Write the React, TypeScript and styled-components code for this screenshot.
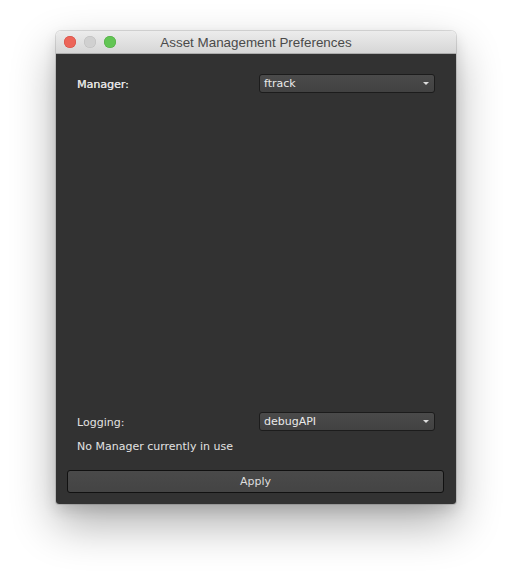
import styled, { createGlobalStyle } from 'styled-components';

const GlobalStyle = createGlobalStyle`
  html, body {
    margin: 0;
    padding: 0;
    background: #ffffff;
  }
`;

const Page = styled.div`
  width: 512px;
  height: 584px;
  padding: 31px 0 0 56px;
  box-sizing: border-box;
`;

const Window = styled.div`
  width: 400px;
  height: 473px;
  display: flex;
  flex-direction: column;
  border-radius: 5px 5px 3px 3px;
  overflow: hidden;
  box-shadow: 0 0 0 1px rgba(0, 0, 0, 0.12), 0 20px 45px rgba(0, 0, 0, 0.32), 0 6px 14px rgba(0, 0, 0, 0.12);
`;

const TitleBar = styled.div`
  height: 22px;
  display: flex;
  align-items: center;
  position: relative;
  background: linear-gradient(#ececec, #d6d6d6);
  border-bottom: 1px solid #acacac;
  font-family: "Liberation Sans", Arial, sans-serif;
  font-size: 13.4px;
  color: #4a4a4a;
`;

const Lights = styled.div`
  display: flex;
  gap: 8px;
  padding-left: 8px;
`;

const Light = styled.span<{ $color: string; $edge: string }>`
  width: 12px;
  height: 12px;
  border-radius: 50%;
  background: ${p => p.$color};
  box-shadow: inset 0 0 0 0.5px ${p => p.$edge};
`;

const Title = styled.div`
  position: absolute;
  left: 0;
  right: 0;
  text-align: center;
  pointer-events: none;
`;

const Body = styled.div`
  flex: 1;
  display: flex;
  flex-direction: column;
  background: #323232;
  padding: 0 12px 11px 11px;
  font-family: "DejaVu Sans", Verdana, sans-serif;
  font-size: 11px;
  color: #e2e2e2;
`;

const Form = styled.div`
  flex: 1;
  display: flex;
  flex-direction: column;
  padding: 20px 9px 0 9px;
`;

const Row = styled.div`
  display: flex;
  align-items: center;
`;

const Label = styled.div<{ $strong?: boolean }>`
  flex: 1;
  padding: 1px 0 0 1px;
  text-shadow: ${p => (p.$strong ? '0.3px 0 0 #e2e2e2' : 'none')};
`;

const Combo = styled.div`
  width: 176px;
  height: 19px;
  box-sizing: border-box;
  display: flex;
  align-items: center;
  justify-content: space-between;
  padding: 0 5px 0 4px;
  border: 1px solid #1c1c1c;
  border-radius: 3px;
  background: linear-gradient(#4a4a4a, #424242);
  color: #eaeaea;
  font-size: 11px;
`;

const Arrow = styled.span`
  width: 0;
  height: 0;
  border-left: 3px solid transparent;
  border-right: 3px solid transparent;
  border-top: 3px solid #dcdcdc;
`;

const Spacer = styled.div`
  flex: 1;
`;

const Status = styled.div`
  margin-top: 9px;
  line-height: 14px;
  padding-left: 1px;
`;

const ApplyButton = styled.button`
  margin-top: 16px;
  height: 23px;
  width: 100%;
  border: 1px solid #111111;
  border-radius: 3px;
  background: linear-gradient(#4a4a4a, #444444);
  color: #dedede;
  font-family: "DejaVu Sans", Verdana, sans-serif;
  font-size: 11px;
  padding: 0;
`;

const Dropdown = ({ value }: { value: string }) => (
  <Combo>
    <span>{value}</span>
    <Arrow />
  </Combo>
);

const App = () => (
  <>
    <GlobalStyle />
    <Page>
      <Window>
        <TitleBar>
          <Lights>
            <Light $color="#ec6559" $edge="#d3493e" />
            <Light $color="#d0d0d0" $edge="#bcbcbc" />
            <Light $color="#62c554" $edge="#4ea83f" />
          </Lights>
          <Title>Asset Management Preferences</Title>
        </TitleBar>
        <Body>
          <Form>
            <Row>
              <Label $strong>Manager:</Label>
              <Dropdown value="ftrack" />
            </Row>
            <Spacer />
            <Row>
              <Label>Logging:</Label>
              <Dropdown value="debugAPI" />
            </Row>
            <Status>No Manager currently in use</Status>
          </Form>
          <ApplyButton>Apply</ApplyButton>
        </Body>
      </Window>
    </Page>
  </>
);

export default App;
